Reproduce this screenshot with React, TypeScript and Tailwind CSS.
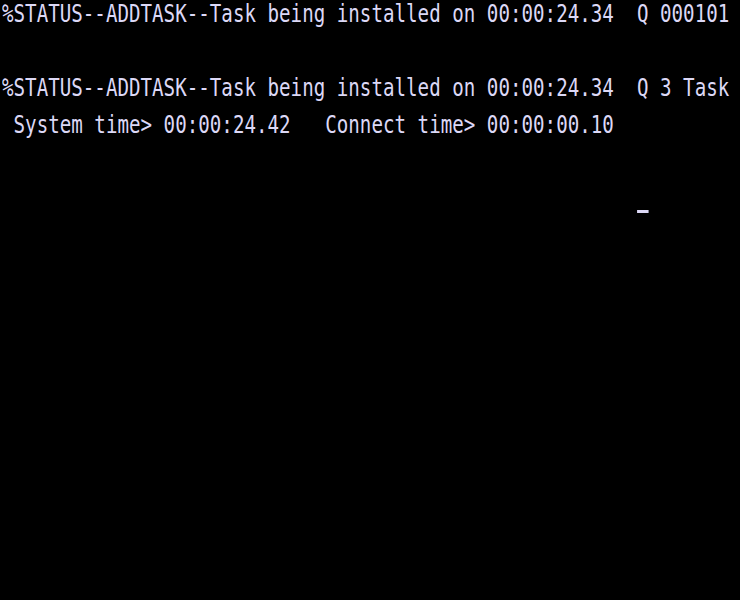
import React from "react";

const lines = [
  "%STATUS--ADDTASK--Task being installed on 00:00:24.34  Q 000101",
  "",
  "%STATUS--ADDTASK--Task being installed on 00:00:24.34  Q 3 Task",
  " System time> 00:00:24.42   Connect time> 00:00:00.10",
  "",
];

export default function App() {
  return (
    <div className="w-[740px] h-[600px] bg-black overflow-hidden">
      <div
        className="pl-[2px] mt-[-5px] text-[#dcd8f6]"
        style={{ fontFamily: '"DejaVu Sans Mono", "Liberation Mono", monospace' }}
      >
        {lines.map((l, i) => (
          <div
            key={i}
            className="h-[37px] text-[25px] leading-[37px] whitespace-pre origin-left scale-x-[0.767]"
          >
            {l || " "}
          </div>
        ))}
        <div className="h-[37px] text-[25px] leading-[37px] whitespace-pre origin-left scale-x-[0.767]">
          {" ".repeat(55)}
          <span className="inline-block w-[15px] h-[3px] bg-[#dcd8f6] align-[-6px]" />
        </div>
      </div>
    </div>
  );
}
